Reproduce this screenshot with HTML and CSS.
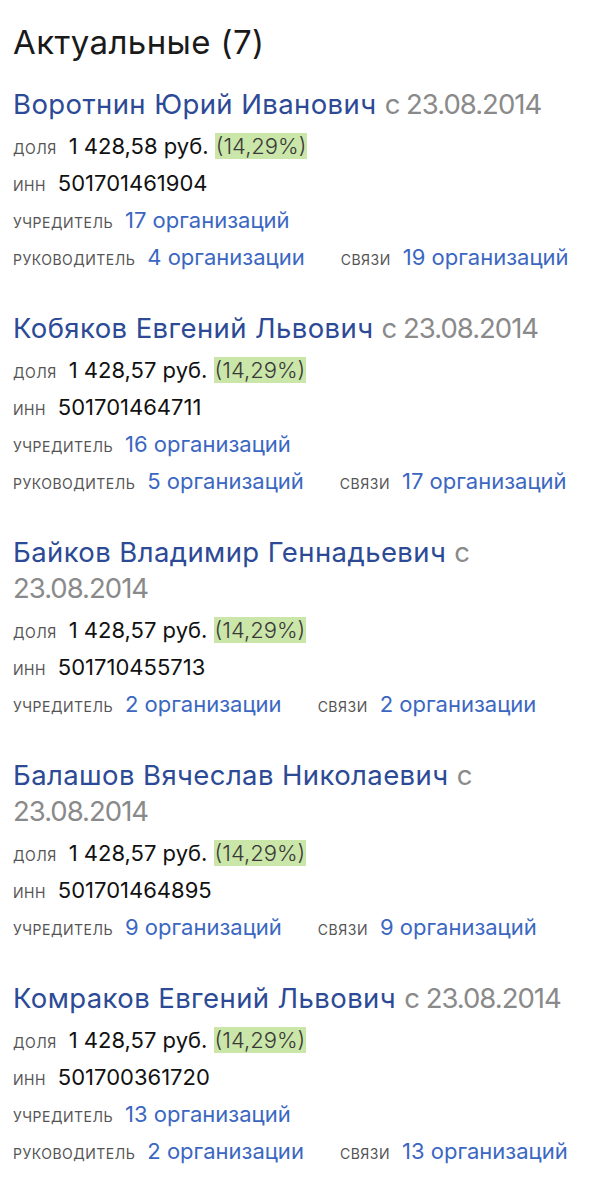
FILE: index.html
```html
<!DOCTYPE html>
<html lang="ru">
<head>
  <meta charset="UTF-8" />
  <meta name="viewport" content="width=device-width, initial-scale=1.0" />
  <title>Учредители</title>
  <link rel="stylesheet" href="styles.css">
</head>
<body>
  <div class="page">
    <h1 class="title">Актуальные (7)</h1>

    <div class="person">
      <div class="name"><a href="#">Воротнин Юрий Иванович</a> <span class="since">с 23.08.2014</span></div>
      <div class="row"><span class="pair"><span class="label">доля</span><span class="value">1 428,58 руб. <span class="pct">(14,29%)</span></span></span></div>
      <div class="row"><span class="pair"><span class="label">инн</span><span class="value">501701461904</span></span></div>
      <div class="row"><span class="pair"><span class="label">учредитель</span><a href="#" class="link">17 организаций</a></span></div>
      <div class="row">
        <span class="pair"><span class="label">руководитель</span><a href="#" class="link">4 организации</a></span>
        <span class="pair"><span class="label">связи</span><a href="#" class="link">19 организаций</a></span>
      </div>
    </div>

    <div class="person">
      <div class="name"><a href="#">Кобяков Евгений Львович</a> <span class="since">с 23.08.2014</span></div>
      <div class="row"><span class="pair"><span class="label">доля</span><span class="value">1 428,57 руб. <span class="pct">(14,29%)</span></span></span></div>
      <div class="row"><span class="pair"><span class="label">инн</span><span class="value">501701464711</span></span></div>
      <div class="row"><span class="pair"><span class="label">учредитель</span><a href="#" class="link">16 организаций</a></span></div>
      <div class="row">
        <span class="pair"><span class="label">руководитель</span><a href="#" class="link">5 организаций</a></span>
        <span class="pair"><span class="label">связи</span><a href="#" class="link">17 организаций</a></span>
      </div>
    </div>

    <div class="person">
      <div class="name"><a href="#">Байков Владимир Геннадьевич</a> <span class="since">с 23.08.2014</span></div>
      <div class="row"><span class="pair"><span class="label">доля</span><span class="value">1 428,57 руб. <span class="pct">(14,29%)</span></span></span></div>
      <div class="row"><span class="pair"><span class="label">инн</span><span class="value">501710455713</span></span></div>
      <div class="row">
        <span class="pair"><span class="label">учредитель</span><a href="#" class="link">2 организации</a></span>
        <span class="pair"><span class="label">связи</span><a href="#" class="link">2 организации</a></span>
      </div>
    </div>

    <div class="person">
      <div class="name"><a href="#">Балашов Вячеслав Николаевич</a> <span class="since">с 23.08.2014</span></div>
      <div class="row"><span class="pair"><span class="label">доля</span><span class="value">1 428,57 руб. <span class="pct">(14,29%)</span></span></span></div>
      <div class="row"><span class="pair"><span class="label">инн</span><span class="value">501701464895</span></span></div>
      <div class="row">
        <span class="pair"><span class="label">учредитель</span><a href="#" class="link">9 организаций</a></span>
        <span class="pair"><span class="label">связи</span><a href="#" class="link">9 организаций</a></span>
      </div>
    </div>

    <div class="person">
      <div class="name"><a href="#">Комраков Евгений Львович</a> <span class="since">с 23.08.2014</span></div>
      <div class="row"><span class="pair"><span class="label">доля</span><span class="value">1 428,57 руб. <span class="pct">(14,29%)</span></span></span></div>
      <div class="row"><span class="pair"><span class="label">инн</span><span class="value">501700361720</span></span></div>
      <div class="row"><span class="pair"><span class="label">учредитель</span><a href="#" class="link">13 организаций</a></span></div>
      <div class="row">
        <span class="pair"><span class="label">руководитель</span><a href="#" class="link">2 организации</a></span>
        <span class="pair"><span class="label">связи</span><a href="#" class="link">13 организаций</a></span>
      </div>
    </div>
  </div>
</body>
</html>
```

FILE: styles.css
```css
body {
  margin: 0;
  background: #fff;
  color: #111;
  font-family: "Inter", "Roboto", sans-serif;
}
.page {
  padding: 20px 13px 0;
}
.title {
  margin: 0;
  font-size: 33px;
  font-weight: 400;
  letter-spacing: 0.4px;
  line-height: 44px;
  color: #1a1a1a;
}
.person {
  margin-top: 34px;
}
.person:first-of-type {
  margin-top: 22px;
}
.name {
  font-size: 27.5px;
  letter-spacing: 0.4px;
  line-height: 36px;
  margin-bottom: 6px;
}
.name a {
  color: #2c4a96;
  text-decoration: none;
}
.since {
  letter-spacing: -1px;
  color: #8a8a8a;
}
.row {
  display: flex;
  align-items: baseline;
  gap: 36px;
  height: 37px;
  line-height: 37px;
  font-size: 22px;
}
.pair {
  display: flex;
  align-items: baseline;
  gap: 12px;
}
.label {
  font-size: 14px;
  letter-spacing: 0.5px;
  text-transform: uppercase;
  color: #555;
}
.value {
  color: #111;
}
.pct {
  padding: 0 1px;
  background: #cbe6a9;
  color: #3a3a3a;
  font-weight: 300;
  line-height: 25px;
}
.link {
  color: #3b67c2;
  text-decoration: none;
}
```
